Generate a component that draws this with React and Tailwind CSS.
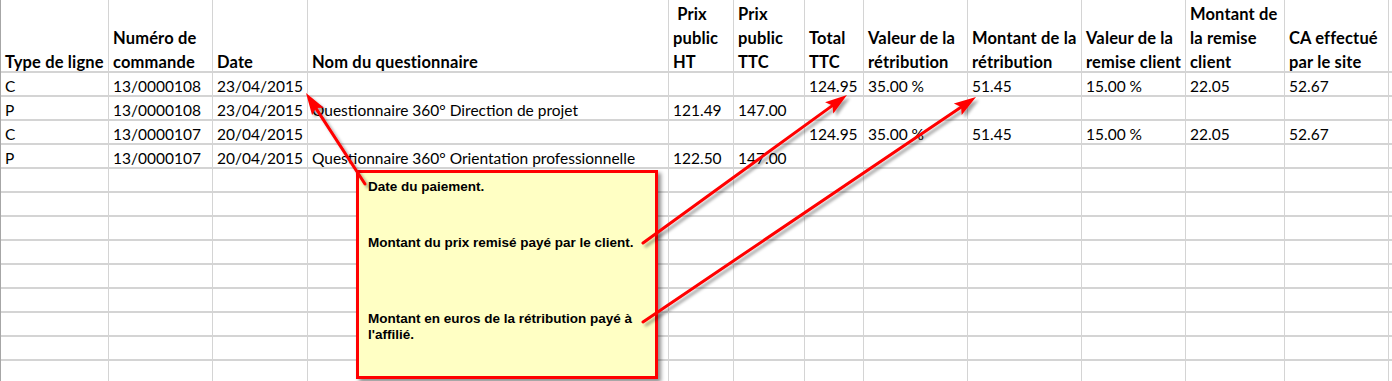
const HEADERS = [
  ['Type de ligne'],
  ['Numéro de', 'commande'],
  ['Date'],
  ['Nom du questionnaire'],
  ['\u00a0Prix', 'public', 'HT'],
  ['Prix', 'public', 'TTC'],
  ['Total', 'TTC'],
  ['Valeur de la', 'rétribution'],
  ['Montant de la', 'rétribution'],
  ['Valeur de la', 'remise client'],
  ['Montant de', 'la remise', 'client'],
  ['CA effectué', 'par le site'],
  [],
]

const ROWS = [
  ['C', '13/0000108', '23/04/2015', '', '', '', '124.95', '35.00 %', '51.45', '15.00 %', '22.05', '52.67'],
  ['P', '13/0000108', '23/04/2015', 'Questionnaire 360° Direction de projet', '121.49', '147.00'],
  ['C', '13/0000107', '20/04/2015', '', '', '', '124.95', '35.00 %', '51.45', '15.00 %', '22.05', '52.67'],
  ['P', '13/0000107', '20/04/2015', 'Questionnaire 360° Orientation professionnelle', '122.50', '147.00'],
]

const EMPTY_ROWS = 9

const ARROWS = [
  { from: [365, 184], to: [306, 93] },
  { from: [643, 243], to: [847, 95] },
  { from: [643, 322], to: [976, 97] },
]

function Arrow({ from, to }) {
  const dx = to[0] - from[0]
  const dy = to[1] - from[1]
  const len = Math.hypot(dx, dy)
  const ux = dx / len
  const uy = dy / len
  const nx = -uy
  const ny = ux
  const L = 22
  const W = 7
  const bx = to[0] - ux * L
  const by = to[1] - uy * L
  const head = `${to[0]},${to[1]} ${bx + nx * W},${by + ny * W} ${bx + ux * 4},${by + uy * 4} ${bx - nx * W},${by - ny * W}`
  return (
    <g filter="url(#shadow)">
      <line x1={from[0]} y1={from[1]} x2={bx + ux * 6} y2={by + uy * 6} stroke="#ff0000" strokeWidth="3" strokeLinecap="round" />
      <polygon points={head} fill="#ff0000" />
    </g>
  )
}

function Cell({ children, header, right, green }) {
  return (
    <div
      className={`border-r border-b border-t border-[#d4d4d4] ${green ? 'border-t-[#217346]' : ''} px-1 whitespace-nowrap overflow-visible ${header ? 'h-[73px] flex flex-col justify-end font-bold text-[16.5px] tracking-[0.15px]' : 'h-[24px] leading-[22px] pt-[2px]'} ${right ? 'text-right' : ''}`}
    >
      {children}
    </div>
  )
}

export default function App() {
  return (
    <div className="relative w-[1392px] h-[381px] overflow-hidden bg-white text-black font-['Lato',sans-serif] text-[15.5px]">

      {/* Sheet */}
      <div className="grid grid-cols-[108px_104px_95px_361px_65px_71px_59px_104px_114px_104px_99px_104px_1fr] border-l border-[#a6a6a6] -mt-px">
        {HEADERS.map((lines, i) => (
          <Cell key={i} header green={i === 7}>
            <div className="-mb-[3px]">
              {lines.map(l => (
                <div key={l} className="leading-[24px]">{l}</div>
              ))}
            </div>
          </Cell>
        ))}
        {ROWS.map((row, r) =>
          HEADERS.map((_, c) => (
            <Cell key={`${r}-${c}`} right={c === 2}>{row[c] || ''}</Cell>
          ))
        )}
        {Array.from({ length: EMPTY_ROWS }).map((_, r) =>
          HEADERS.map((_, c) => <Cell key={`e${r}-${c}`} />)
        )}
      </div>

      {/* Comment box */}
      <div className="absolute left-[356px] top-[170px] w-[302px] h-[209px] bg-[#ffffc4] border-[3px] border-[#ff0000] shadow-[3px_3px_4px_rgba(0,0,0,0.45)] pl-[9px] pt-[6px] font-['Liberation_Sans',sans-serif] font-bold text-[13.5px] leading-[16px]">
        <div>Date du paiement.</div>
        <div className="mt-[40px]">Montant du prix remisé payé par le client.</div>
        <div className="mt-[60px]">Montant en euros de la rétribution payé à<br />l'affilié.</div>
      </div>

      {/* Arrows */}
      <svg className="absolute inset-0 pointer-events-none" width="1392" height="381">
        <defs>
          <filter id="shadow" x="-20%" y="-20%" width="140%" height="140%">
            <feDropShadow dx="3" dy="3" stdDeviation="1.5" floodColor="#000" floodOpacity="0.35" />
          </filter>
        </defs>
        {ARROWS.map((a, i) => <Arrow key={i} {...a} />)}
      </svg>
    </div>
  )
}
